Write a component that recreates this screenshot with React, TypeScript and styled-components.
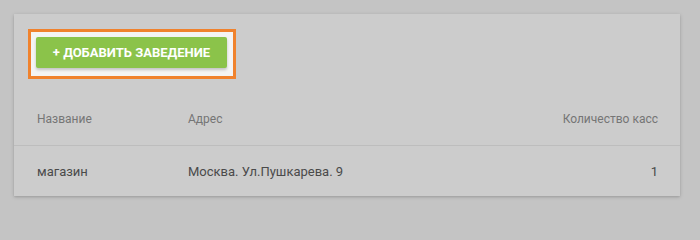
import styled, { createGlobalStyle } from 'styled-components';

const GlobalStyle = createGlobalStyle`
  html, body {
    margin: 0;
    padding: 0;
    background: #c4c4c4;
    font-family: Roboto, 'Liberation Sans', sans-serif;
  }
`;

const Page = styled.div`
  padding: 14px 20px 13px 14px;
`;

const Card = styled.div`
  background: #cccccc;
  box-shadow: 0 1px 4px rgba(0, 0, 0, 0.14), 0 1px 2px rgba(0, 0, 0, 0.1);
`;

const Toolbar = styled.div`
  display: flex;
  padding: 15px 14px 0 14px;
  height: 79px;
  box-sizing: border-box;
`;

const FocusRing = styled.div`
  border: 3px solid #f0822d;
  padding: 5px 6px 8px 5px;
  background: #f4f4f4;
  align-self: flex-start;
  display: flex;
`;

const AddButton = styled.button`
  background: #8bc34a;
  color: #ffffff;
  border: none;
  border-radius: 2px;
  height: 31px;
  width: 191px;
  padding: 0;
  font-family: Roboto, 'Liberation Sans', sans-serif;
  font-weight: 700;
  font-size: 13px;
  text-transform: uppercase;
  box-shadow: 0 2px 3px rgba(0, 0, 0, 0.2);
  cursor: pointer;
`;

const Table = styled.table`
  width: 100%;
  border-collapse: collapse;
`;

const HeadCell = styled.th<{ $right?: boolean }>`
  height: 52px;
  padding: 0 ${(p) => (p.$right ? '22px' : '0')} 0 ${(p) => (p.$right ? '0' : '23px')};
  text-align: ${(p) => (p.$right ? 'right' : 'left')};
  font-size: 12px;
  font-weight: 400;
  color: #757575;
  border-bottom: 1px solid #bdbdbd;
  vertical-align: middle;
`;

const Cell = styled.td<{ $right?: boolean }>`
  height: 50px;
  padding: 0 ${(p) => (p.$right ? '22px' : '0')} 0 ${(p) => (p.$right ? '0' : '23px')};
  text-align: ${(p) => (p.$right ? 'right' : 'left')};
  font-size: 13px;
  color: #4a4a4a;
  vertical-align: middle;
`;

export default function App() {
  return (
    <>
      <GlobalStyle />
      <Page>
        <Card>
          <Toolbar>
            <FocusRing>
              <AddButton>+ Добавить заведение</AddButton>
            </FocusRing>
          </Toolbar>
          <Table>
            <thead>
              <tr>
                <HeadCell style={{ width: 128 }}>Название</HeadCell>
                <HeadCell>Адрес</HeadCell>
                <HeadCell $right>Количество касс</HeadCell>
              </tr>
            </thead>
            <tbody>
              <tr>
                <Cell>магазин</Cell>
                <Cell>Москва. Ул.Пушкарева. 9</Cell>
                <Cell $right>1</Cell>
              </tr>
            </tbody>
          </Table>
        </Card>
      </Page>
    </>
  );
}
